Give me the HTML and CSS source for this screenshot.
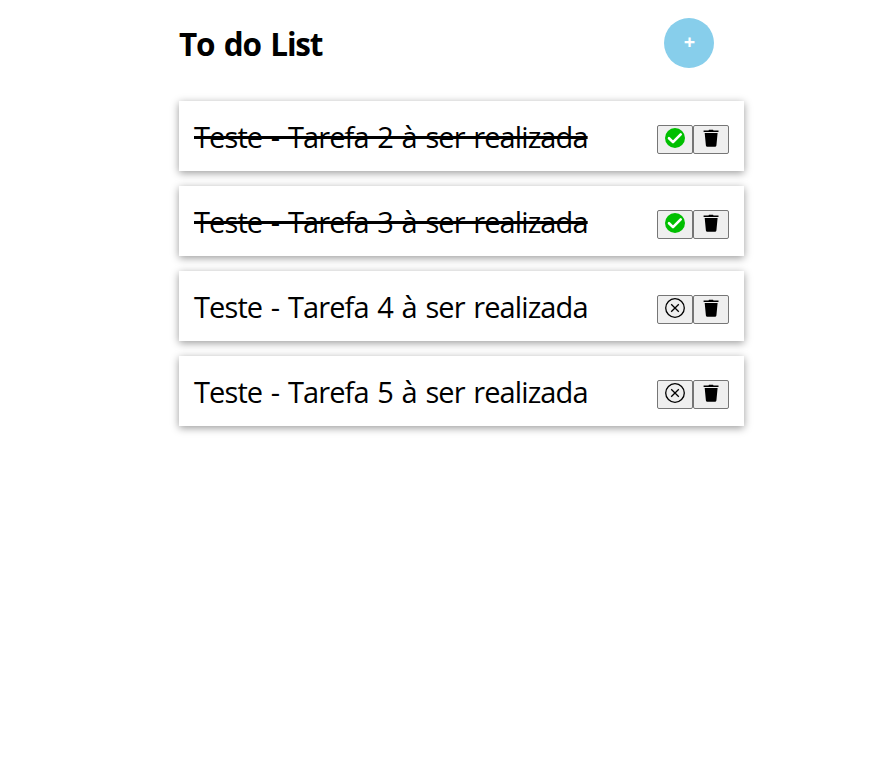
FILE: index.html
```html
<!DOCTYPE html>
<html lang="pt-BR">
<head>
<meta charset="utf-8">
<title>To do List</title>
<link rel="stylesheet" href="styles.css">
</head>
<body>
<svg class="defs" aria-hidden="true">
  <symbol id="check" viewBox="0 0 20 20"><circle cx="10" cy="10" r="10" fill="#00bf00"/><path d="M4 10.200l4 3.900 7.700-7.700" fill="none" stroke="#fff" stroke-width="2.600" stroke-linecap="round" stroke-linejoin="round"/></symbol>
  <symbol id="cancel" viewBox="0 0 20 20"><g fill="none" stroke="#000" stroke-width="1.300"><circle cx="10" cy="10" r="9.300"/><path d="M6.200 6.200l7.600 7.600M13.800 6.200l-7.600 7.600"/></g></symbol>
  <symbol id="trash" viewBox="0 0 20 20"><path d="M2.600 2.500h4.900L8 1.800h4l.5.700h5v1.600H2.600zM3.700 5h12.900l-1.200 12.500q-.2 1.200-1.400 1.200H6.300q-1.200 0-1.400-1.200z"/></symbol>
</svg>
<main class="container">
  <header class="header"><h1>To do List</h1><button class="add">+</button></header>
  <section class="list">
    <article class="task done"><p>Teste - Tarefa 2 à ser realizada</p><div class="actions"><button><svg><use href="#check"/></svg></button><button><svg><use href="#trash"/></svg></button></div></article>
    <article class="task done"><p>Teste - Tarefa 3 à ser realizada</p><div class="actions"><button><svg><use href="#check"/></svg></button><button><svg><use href="#trash"/></svg></button></div></article>
    <article class="task"><p>Teste - Tarefa 4 à ser realizada</p><div class="actions"><button><svg><use href="#cancel"/></svg></button><button><svg><use href="#trash"/></svg></button></div></article>
    <article class="task"><p>Teste - Tarefa 5 à ser realizada</p><div class="actions"><button><svg><use href="#cancel"/></svg></button><button><svg><use href="#trash"/></svg></button></div></article>
  </section>
</main>
</body>
</html>
```
FILE: styles.css
```css
* { box-sizing: border-box; margin: 0; padding: 0; }
body { min-height: 100vh; background: #fff; color: #000; font-family: "Open Sans", "Noto Sans", sans-serif; }
.defs { display: none; }
.container { width: 565px; margin-left: 179px; padding-top: 18px; }
.header { display: flex; align-items: center; justify-content: space-between; height: 50px; padding-right: 30px; margin-bottom: 33px; }
h1 { font-size: 31.5px; font-weight: 700; line-height: 44px; letter-spacing: -1.2px; word-spacing: 2.5px; padding-top: 2px; white-space: nowrap; }
.add { width: 50px; height: 50px; padding: 0 0 4px 1px; border: 0; border-radius: 50%; background: skyblue; color: #fff; font: 700 20px "Open Sans", sans-serif; }
.list { display: flex; flex-direction: column; gap: 15px; }
.task { display: flex; align-items: center; justify-content: space-between; height: 70px; padding: 0 15px; background: #fff; box-shadow: 0 2px 8px rgba(0, 0, 0, .4); }
.task p { font-size: 29px; font-weight: 400; line-height: 40px; letter-spacing: -0.9px; word-spacing: 2px; padding-top: 2px; white-space: nowrap; }
.done p { text-decoration: line-through; text-decoration-thickness: 3px; }
.actions { display: flex; padding-top: 7px; }
.actions button { display: flex; align-items: flex-start; justify-content: center; width: 36px; height: 29px; padding-top: 2px; border: 1px solid #767676; border-radius: 2px; background: #efefef; }
.actions svg { width: 20px; height: 20px; }
```
